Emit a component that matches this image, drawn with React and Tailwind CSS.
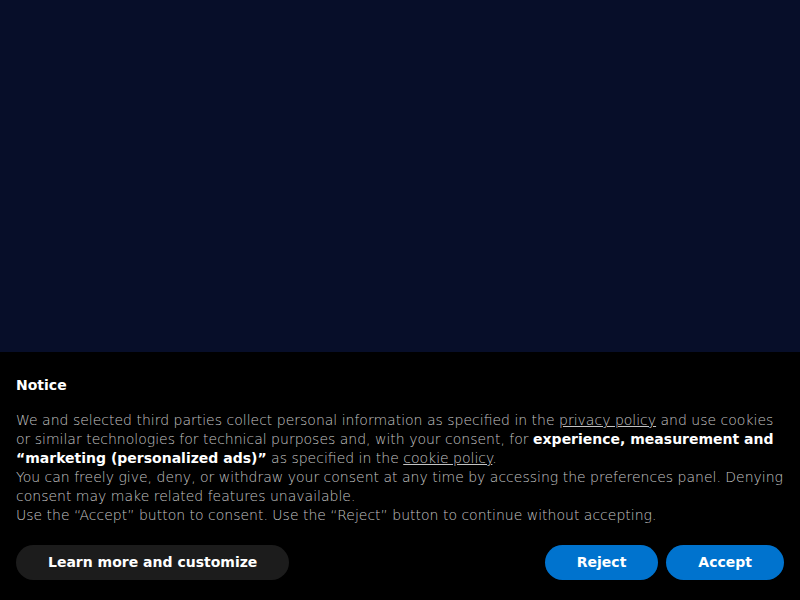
export default function App() {
  return (
    <div className="flex h-[600px] w-full flex-col bg-[#070e29] font-['DejaVu_Sans',sans-serif]">
      <div className="flex-1" />
      <section className="bg-black px-4 pt-6 pb-5 text-[14px] leading-[19px]">
        <h2 className="font-bold text-white">Notice</h2>
        <p className="mt-4 font-light text-[#c4c4c4]">
          We and selected third parties collect personal information as specified in the{' '}
          <a href="#" className="underline">privacy policy</a> and use cookies or similar technologies for technical
          purposes and, with your consent, for{' '}
          <strong className="font-bold text-white">experience, measurement and “marketing (personalized ads)”</strong>{' '}
          as specified in the <a href="#" className="underline">cookie policy</a>.
          <br />
          You can freely give, deny, or withdraw your consent at any time by accessing the preferences panel. Denying
          consent may make related features unavailable.
          <br />
          Use the “Accept” button to consent. Use the “Reject” button to continue without accepting.
        </p>
        <div className="mt-5 flex items-center justify-between">
          <button type="button" className="rounded-full bg-[#1c1c1c] px-8 py-2 font-bold text-white">
            Learn more and customize
          </button>
          <div className="flex gap-2">
            <button type="button" className="rounded-full bg-[#0073ce] px-8 py-2 font-bold text-white">
              Reject
            </button>
            <button type="button" className="rounded-full bg-[#0073ce] px-8 py-2 font-bold text-white">
              Accept
            </button>
          </div>
        </div>
      </section>
    </div>
  )
}
